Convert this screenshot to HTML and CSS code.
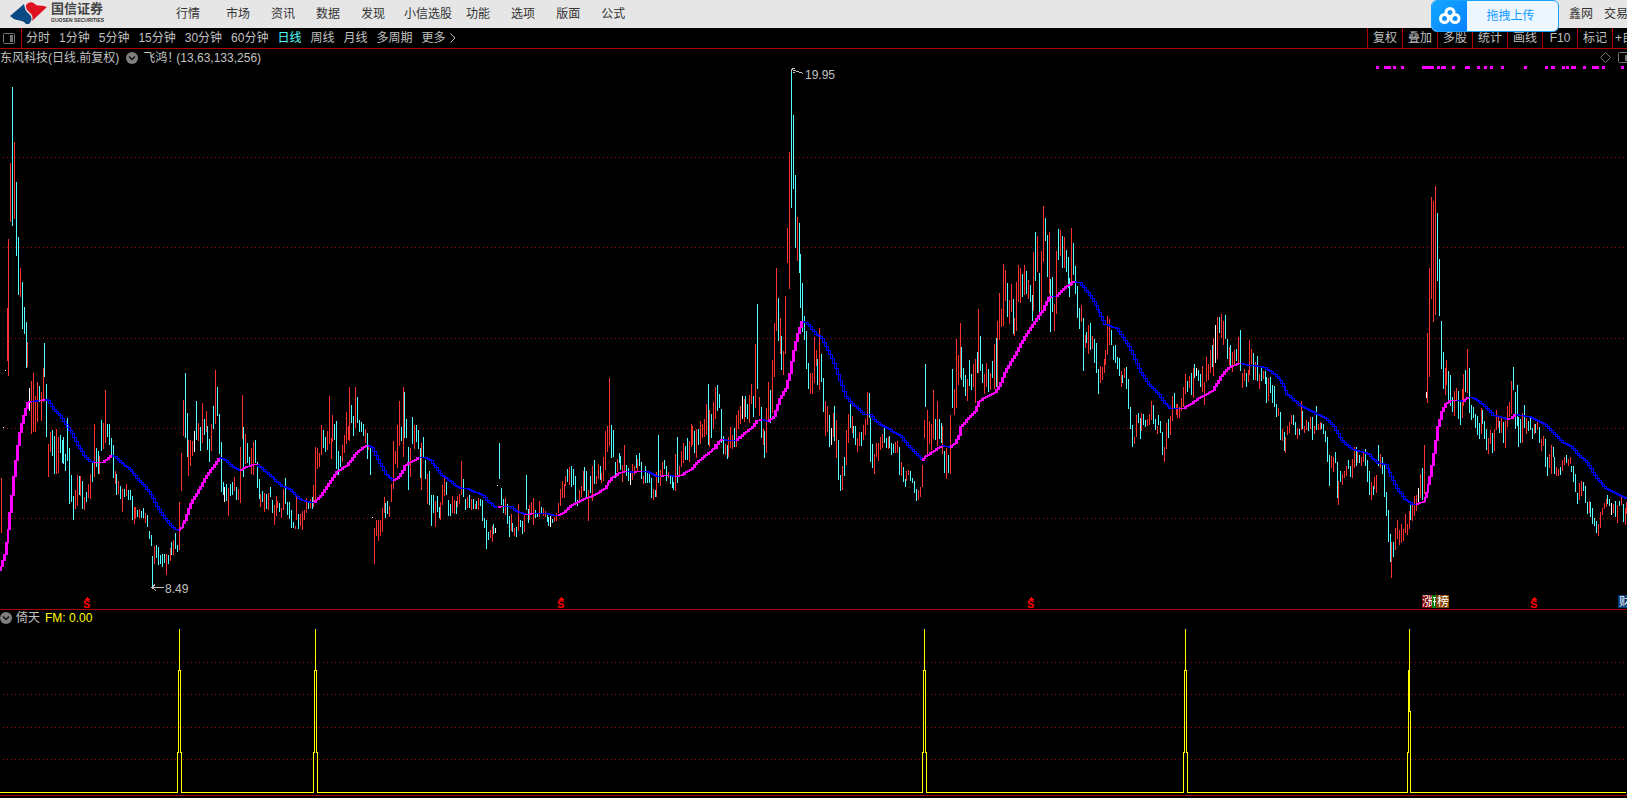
FILE: index.html
```html
<!DOCTYPE html>
<html lang="zh-CN">
<head>
<meta charset="utf-8">
<title>国信证券</title>
<link rel="stylesheet" href="styles.css">
</head>
<body>
<header class="topbar">
  <div class="brand">
    <svg class="brand-mark" width="38" height="24" viewBox="0 0 38 24" aria-hidden="true">
      <path fill="#0c4a85" d="M0 14 14 2C15 6 15 8 18 11C22 14 23 18 19 22L16 22C13 18 9 19 4 17Z"/>
      <path fill="#df1220" d="M16 3C20-1 23 0 26 3C29 4 32 3 37 5L22 19C24 13 20 11 18 9C16 7 16 5 16 3Z"/>
    </svg>
    <div class="brand-text"><span class="brand-cn">国信证券</span><span class="brand-en">GUOSEN SECURITIES</span></div>
  </div>
  <nav class="menu">
    <button class="wide">行情</button><button>市场</button><button>资讯</button><button>数据</button><button>发现</button><button class="tight">小信选股</button><button>功能</button><button>选项</button><button>版面</button><button>公式</button>
  </nav>
  <nav class="menu-right"><button>鑫网</button><button>交易</button></nav>
  <button class="upload">
    <span class="upload-icon"><svg width="22" height="18" viewBox="0 0 22 18" fill="none" stroke="#fff" stroke-width="3" aria-hidden="true"><circle cx="11" cy="5.500" r="4"/><circle cx="5.500" cy="11.500" r="4"/><circle cx="16" cy="11.500" r="4"/></svg></span>
    <span class="upload-label">拖拽上传</span>
  </button>
</header>
<div class="toolbar">
  <button class="panel-toggle" aria-label="侧栏"><svg width="12" height="11" viewBox="0 0 12 11" aria-hidden="true"><rect x=".5" y=".5" width="11" height="10" rx="1" fill="none" stroke="#777"/><rect x="7" y="2" width="3" height="7" fill="#777"/></svg></button>
  <div class="periods">
    <button>分时</button><button>1分钟</button><button>5分钟</button><button>15分钟</button><button>30分钟</button><button>60分钟</button><button class="active">日线</button><button>周线</button><button>月线</button><button>多周期</button><button>更多<svg class="more" width="6" height="10" viewBox="0 0 6 10" fill="none" stroke="#c0c0c0" aria-hidden="true"><path d="M.5.500 5 5 .5 9.500"/></svg></button>
  </div>
  <div class="tools">
    <button>复权</button><button>叠加</button><button>多股</button><button>统计</button><button>画线</button><button>F10</button><button>标记</button><button class="clipped">+自</button>
  </div>
</div>
<main class="pane price-pane">
  <svg class="plot" id="price" aria-label="日线">
    <g class="grid"><path d="M3 108.500H2600M3 198.500H2600M3 289.500H2600M3 379.500H2600M3 469.500H2600"/></g>
    <path class="bar up" id="up"/><path class="bar down" id="down"/><path class="bar flat" id="flat"/>
    <path class="ma-fall" id="fall"/><path class="ma-rise" id="rise"/>
    <path class="signals" id="signals"/>
    <path class="pointer" d="M791.500 20V23M792 20.500 803 24.500M792 19.500H795M793 23.500H795"/>
    <text class="value" x="805" y="30">19.95</text>
    <path class="pointer" d="M152 538.500H164M155 535.500 152 538.500 156 542"/>
    <text class="value" x="165" y="544">8.49</text>
    <g class="event">
      <path d="M84 551H90L87 548Z"/><text x="83" y="559">S</text>
      <path d="M558 551H564L561 548Z"/><text x="557" y="559">S</text>
      <path d="M1028 551H1034L1031 548Z"/><text x="1027" y="559">S</text>
      <path d="M1531 551H1537L1534 548Z"/><text x="1530" y="559">S</text>
    </g>
    <g class="tags">
      <rect x="1422" y="546" width="12" height="13" fill="#800000"/><text x="1422" y="557">涨</text>
      <rect x="1432" y="546" width="5" height="13" fill="#008000"/><path d="M1433 548.500H1436M1434.500 548V557M1433 552.500H1436" stroke="#fff"/>
      <rect x="1436" y="546" width="13" height="13" fill="#804000"/><text x="1437" y="557">榜</text>
      <rect x="1618" y="546" width="13" height="13" fill="#003a75"/><text x="1619" y="557">财</text>
    </g>
  </svg>
  <div class="caption">
    <span>东风科技(日线.前复权)</span>
    <svg class="chevron" width="12" height="12" viewBox="0 0 12 12" aria-hidden="true"><circle cx="6" cy="6" r="6" fill="#808080"/><path d="M3 4.500 6 7.500 9 4.500" fill="none" stroke="#111" stroke-width="1.500"/></svg>
    <span class="formula">飞鸿！</span><span>(13,63,133,256)</span>
    <svg class="corner" width="27" height="12" viewBox="0 0 27 12" fill="none" stroke="#777" aria-hidden="true"><path d="M5.500.500 10.500 5.500 5.500 10.500 .5 5.500Z"/><rect x="18.500" y=".5" width="12" height="10" rx="1"/><path d="M26 3V9" stroke-width="2"/></svg>
  </div>
</main>
<section class="pane signal-pane">
  <svg class="plot" id="fm" aria-label="倚天">
    <g class="grid"><path d="M3 52.500H2600M3 84.500H2600M3 117.500H2600M3 149.500H2600"/></g>
    <path class="spikes" id="spikes"/>
  </svg>
  <div class="caption">
    <svg class="chevron" width="12" height="12" viewBox="0 0 12 12" aria-hidden="true"><circle cx="6" cy="6" r="6" fill="#808080"/><path d="M3 4.500 6 7.500 9 4.500" fill="none" stroke="#111" stroke-width="1.500"/></svg>
    <span>倚天</span><span class="fm">FM: 0.00</span>
  </div>
</section>
<script src="chart.js"></script>
</body>
</html>
```

FILE: styles.css
```css
* { box-sizing: border-box; }
body {
  margin: 0;
  background: #000;
  color: #c0c0c0;
  font: 12px/16px "Liberation Sans", "Noto Sans CJK SC", sans-serif;
  overflow: hidden;
}
button {
  padding: 0;
  border: 0;
  background: none;
  color: inherit;
  font: inherit;
  white-space: nowrap;
  flex: none;
}
.topbar {
  position: relative;
  display: flex;
  align-items: center;
  height: 28px;
  background: #e6e6e6;
  color: #333;
}
.brand { display: flex; gap: 3px; width: 176px; padding-left: 10px; }
.brand-mark { flex: none; }
.brand-text { display: flex; flex-direction: column; }
.brand-cn { font-size: 13px; line-height: 14px; font-weight: bold; color: #444; }
.brand-en { font-size: 5px; line-height: 8px; font-weight: bold; white-space: nowrap; }
.menu { display: flex; gap: 21px; }
.menu .wide { margin-right: 5px; }
.menu .tight { margin: 0 -7px 0 -2px; }
.menu-right { display: flex; gap: 11px; width: 58px; margin-left: auto; overflow: hidden; }
.upload {
  position: absolute;
  top: 0;
  right: 68px;
  z-index: 1;
  display: flex;
  width: 128px;
  height: 32px;
  overflow: hidden;
  border: 1px solid #1aa0ff;
  border-radius: 6px;
  background: #edf7ff;
  color: #109bff;
}
.upload-icon {
  display: flex;
  align-items: center;
  justify-content: center;
  width: 35px;
  height: 30px;
  background: linear-gradient(135deg, #10a8ff, #0b80ff);
}
.upload-label { flex: 1; padding-right: 4px; line-height: 30px; }
.toolbar {
  display: flex;
  height: 21px;
  border-bottom: 1px solid #b00000;
  line-height: 20px;
}
.panel-toggle { display: flex; align-items: center; width: 22px; padding-left: 3px; border-right: 1px solid #b00000; }
.periods { display: flex; gap: 9px; padding-left: 4px; }
.periods .active { color: #54ffff; }
.more { margin-left: 4px; vertical-align: -1px; }
.tools { display: flex; margin-left: auto; }
.tools button { width: 35px; border-left: 1px solid #b00000; }
.tools .clipped { width: 15px; padding-left: 2px; overflow: hidden; text-align: left; }
.pane { display: grid; border-bottom: 1px solid #b00000; }
.pane > * { grid-area: 1 / 1; }
.plot { display: block; width: 100%; overflow: visible; shape-rendering: crispEdges; }
.price-pane .plot { height: 560px; }
.signal-pane .plot { height: 185px; }
.caption { display: flex; align-items: center; align-self: start; height: 17px; white-space: nowrap; }
.price-pane .chevron { margin: 0 5px 0 7px; }
.formula { width: 33px; }
.signal-pane .caption { height: 15px; }
.signal-pane .chevron { margin-right: 4px; }
.corner { margin-left: auto; }
.fm { margin-left: 5px; color: #ff0; }
.grid path { stroke: #a00000; stroke-dasharray: 1 3; }
.bar { fill: none; stroke-width: 1; }
.up { stroke: #ff3232; }
.down { stroke: #54ffff; }
.flat { stroke: #fff; }
.ma-rise { fill: #f0f; }
.ma-fall { fill: none; stroke: #00f; }
.signals { stroke: #f0f; stroke-width: 3; }
.pointer { fill: none; stroke: #c0c0c0; }
.value { fill: #c0c0c0; }
.event { fill: #f00; font: bold 11px/11px "Liberation Sans", sans-serif; }
.tags text { fill: #fff; font-size: 12px; }
.spikes { fill: none; stroke: #ff0; }
```

FILE: chart.js
```js
// Bars: r = up, c = down, w = flat, then x, high and low in thirds of a pixel
// from the segment's origin. Averages: m = rising run, b = falling run.
const segments = [
  { x: 0, y: 281, bars: `
r4,444,608 r22,-65,92 r25,-272,137 r31,-501,-324 c37,-729,-313 r43,-564,-334 c49,-444,-222 c55,-279,-105
r61,-186,-99 c67,-144,-4 c73,-69,12 c79,-24,113 r82,37,110 w16,121,124 w10,292,295 w88,174,242 r94,153,311
r100,129,305 r106,198,305 r112,156,275 c118,168,215 r124,186,272 r130,114,215 c133,39,140 c139,162,320
r145,342,440 r151,306,365 c157,300,377 c163,318,431 r169,297,431 r175,321,428 c181,315,368 c187,330,398
c190,321,401 c196,372,423 c202,264,392 c208,354,521 c214,435,516 c220,498,570 r226,480,536 r232,435,527
c238,438,494 r241,438,497 c247,453,536 r253,501,539 c259,486,515 r265,462,503 r271,432,506 c277,393,455
r283,282,440 c289,354,410 c295,363,431 r298,378,431 c304,270,362 r310,279,356 r316,180,338 c322,282,320
c328,282,344 c334,324,374 c340,345,443 r346,423,461 c349,432,494 r355,453,491 c361,468,506 r367,477,545
c373,477,500 r379,462,497 c385,480,509 c391,480,509 c397,498,569 r403,531,581 r406,531,566 c412,540,560
r418,537,563 c424,543,563 c430,534,563 r436,549,578 c442,555,590 c448,603,626 c454,615,647 c457,678,773
r463,648,701 c469,645,683 c475,651,704 c481,675,701 c487,672,710 c493,672,698 r499,672,734 c505,675,701
r511,654,692 c514,636,674 r520,630,674 c526,609,656 c532,645,665 r538,516,659 r544,369,482 r550,210,317
c556,129,323 c562,249,380 r565,330,437 r571,330,407 r577,333,377 w583,303,365 c589,213,329 r595,279,332
c601,291,362 r607,219,338 c613,267,314 r619,243,305 c622,288,359 c628,327,395 r634,282,362 c640,228,296
r646,120,281 c652,171,257 c658,252,371 c664,336,485 c670,456,494 w673,471,515 c679,462,512 r685,474,557
c691,462,497 c697,456,494 r703,441,482 c709,471,509 r715,477,509 r721,351,518 r727,195,326 c730,291,440
r736,312,401 c742,339,398 c748,381,404 r754,354,431 r760,336,434 c766,330,398 c772,396,475 c778,447,506
r781,492,530 c787,483,515 r793,489,545 c799,492,536 r805,489,539 c811,471,500 c817,510,548 r823,525,584
r829,498,557 r832,513,533 c838,519,545 r844,534,563 r850,477,539 c856,444,521 c862,516,554 c868,516,566
c874,540,593 c880,576,593 r886,588,596 r889,501,569 c895,552,596 r901,552,587 r907,543,599 r913,540,569
r919,504,548 c925,516,536 r931,507,533 c937,501,536 r940,465,530 r946,351,515 r952,354,416 r958,369,410
r964,285,374 c970,300,353 c976,321,365 r982,303,359 r988,198,341 r994,324,386 r997,255,335 c1003,282,329
c1009,273,416 c1015,363,434 c1021,378,410 r1027,345,395 r1033,315,368 r1039,246,341 r1045,288,331
r1048,171,332 c1054,225,278 c1060,258,317 r1066,171,293 c1072,201,278 c1078,270,305 c1084,276,305
c1090,282,317 r1096,297,338 c1102,309,386 r1105,348,359 c1111,354,434 w1117,561,564 r1123,594,701
r1129,570,617 r1135,570,632 r1141,570,617 r1147,534,605 r1153,501,548 c1156,519,563 c1162,513,551
r1168,528,560 r1174,462,515 r1180,333,476 r1186,363,401 r1192,285,413 r1198,213,347`,
    runs: [
      "m 0,722 4,708 10,692 16,672 22,638 25,598 31,548 37,495 43,440 49,390 55,345 61,308 67,280 73,256 79,234 85,218 91,215",
      "b 91,215 118,212", "m 118,212 133,209",
      "b 133,207 145,212 163,237 187,264 211,300 235,345 253,375 271,393 283,398",
      "m 283,398 310,396 322,387 334,377",
      "b 334,377 346,379 364,397 391,418 412,444 436,470 454,492 472,528 490,556 508,580 526,597 538,600",
      "m 538,600 547,592 556,570 574,520 598,479 622,436 646,403 658,384",
      "b 658,383 673,387 697,409 721,422", "m 721,422 736,412 760,404 772,404",
      "b 772,404 784,412 808,434 847,468 871,478 898,505 919,515 943,517",
      "m 943,517 964,497 988,461 1012,425 1042,406 1072,366 1096,348 1105,347",
      "b 1105,347 1117,352 1135,388 1159,433 1180,450",
      "m 1180,450 1186,448"] },
  { x: 400, y: 321, bars: `
c4,171,212 r10,51,260 c13,66,203 c19,147,203 c25,231,359 r31,234,320 c37,141,221 r43,165,236 c49,165,215
c55,180,236 c61,234,323 r64,219,359 c70,201,263 c76,270,326 r82,312,401 c88,303,404 c94,375,467 c100,375,428
r106,393,470 c112,378,425 c118,411,443 r121,396,449 r127,345,404 r133,324,377 c139,336,374 c145,390,437
c151,402,437 r157,378,428 r163,390,431 c169,393,431 r172,378,410 r178,372,401 r184,273,374 c190,327,380
c196,387,419 r202,381,413 c208,375,413 r214,387,419 c220,387,416 r226,402,416 c229,393,416 r235,384,419
c241,387,407 c247,390,452 c253,444,473 c259,450,536 c265,486,509 r271,480,503 r277,468,515 c280,462,491
w286,474,488 w292,345,348 c298,219,326 c304,354,404 c310,387,428 r316,384,434 c322,402,461 c328,438,500
r334,432,482 c337,459,485 r343,474,497 c349,471,500 r355,402,482 c361,450,470 c367,453,491 r373,435,485
c379,315,419 c385,417,458 r388,405,449 r394,396,428 r400,384,464 c406,420,443 c412,432,440 r418,393,440
c424,411,431 r430,414,437 r436,423,440 c442,432,455 c445,441,467 w451,438,470 c457,447,458 r463,441,455
r469,429,452 r475,399,428 r481,357,407 r487,333,383 r493,342,383 r496,318,347 c502,297,335 r508,291,344
c514,288,350 c520,297,344 c526,318,401 c532,390,407 r538,360,389 r544,348,380 r550,303,362 c553,291,362
c559,303,380 r565,360,452 c571,318,368 r577,288,392 c583,270,341 r589,318,341 r595,282,326 c601,288,329
r604,309,338 r610,261,332 r616,183,299 r622,168,245 r628,24,227 c634,165,263 c640,180,260 c646,276,323
r652,267,305 c658,249,278 c661,258,299 r667,285,335 r673,225,302 c679,285,317 c685,294,332 w691,309,344
r697,282,329 r703,288,314 c709,255,293 r712,267,305 c718,249,287 c724,276,326 r730,318,341 c736,288,338
c742,303,338 c748,312,338 c754,324,383 r760,357,389 c766,360,380 r769,306,380 c775,195,338 r781,300,347
r787,276,320 c793,270,296 c799,288,332 r805,306,323 c811,318,341 c817,321,353 c820,336,359 r826,252,362
c832,201,338 r838,288,320`,
    runs: [
      "m -20,330 -8,325 -2,319",
      "m -2,319 4,311 10,300 16,287 28,278 43,272 55,263",
      "b 55,263 76,263 94,272 109,293 127,317 148,330 166,347 184,354 202,356 250,376 268,397 290,413",
      "m 296,413 308,408", "b 308,409 332,410 346,422 376,433", "m 376,433 400,431",
      "b 400,431 442,431 460,436 475,436",
      "m 475,436 493,427 520,402 550,388 580,377 616,355 637,322 661,308 679,304",
      "b 679,304 703,307", "m 703,306 724,304", "b 724,304 742,305 772,319 785,319", "m 785,318 805,316",
      "b 805,316 826,319",
      "m 826,319 844,316 874,298 892,278 922,252 944,235 958,213 967,209",
      "b 967,209 985,211 1010,211", "m 1010,211 1036,188 1060,170 1072,152 1084,148"] },
  { x: 680, y: 11, bars: `
r4,1173,1220 r10,1149,1208 c16,1158,1199 c22,1134,1199 r28,1143,1205 r34,1092,1160 r37,1098,1154 c43,1113,1178
r49,1107,1193 c55,1107,1154 r61,1083,1151 r67,1092,1133 r73,1077,1130 r79,1032,1124 c85,972,1154 r88,1050,1160
c94,1062,1133 r100,1026,1106 r106,981,1076 c112,975,1052 c118,1002,1043 c124,1047,1148 c130,1128,1181
r136,1152,1184 c142,1155,1196 r145,1131,1190 r151,1101,1163 r157,1125,1166 c163,1104,1160 r169,1065,1160
r175,1050,1106 r181,1038,1091 w187,1008,1076 r193,1017,1085 c196,1008,1070 c202,1032,1076 r208,1005,1088
r214,972,1031 c220,1008,1070 r226,852,1043 c232,732,986 r238,1011,1067 c244,1041,1133 r250,1107,1154
c253,1113,1193 r259,1044,1178 r265,966,1082 c271,990,1088 r277,900,1058 r283,789,950 r289,624,812
c295,714,842 r301,774,881 c304,828,929 r310,873,944 r316,708,881 r322,504,608 r328,276,686 c334,36,443
c340,165,386 c346,345,563 r352,471,602 c358,489,638 c361,582,743 c367,669,815 c373,768,839 c379,813,926
c385,909,986 r391,939,1001 r397,939,1001 r403,831,968 r409,870,917 c412,897,974 r418,804,989 c424,882,965
c430,954,1055 r436,1023,1127 r442,1038,1115 c448,1065,1160 w454,1104,1154 r460,1059,1130 c463,1038,1142
r469,1080,1193 c475,1140,1259 c481,1245,1292 r487,1218,1289 c493,1191,1247 r499,1110,1214 r505,1062,1148
c511,1029,1103 r517,1068,1118 c520,1098,1133 c526,1098,1154 r532,1134,1175 r538,1116,1157 c544,1116,1157
r550,1095,1139 r556,1077,1124 r562,996,1094 c568,999,1073 c571,1074,1205 c577,1152,1223 r583,1182,1241
r589,1149,1190 r595,1149,1202 r601,1131,1169 r607,1122,1163 c613,1095,1148 c619,1134,1163 r625,1131,1166
c628,1128,1163 c634,1149,1184 c640,1152,1178 r646,1146,1178 r652,1143,1178 c658,1161,1244`,
    runs: [
      "b 244,1078 265,1083",
      "m 265,1083 283,1070 301,1015 319,985 331,940 343,870 355,820 367,785",
      "b 367,785 379,787 391,800 409,822 427,835 445,870 463,910 481,960 499,1010 517,1030 553,1062 571,1064 589,1084 613,1100 661,1126 685,1155 727,1198"] },
  { x: 900, y: 141, bars: `
r4,816,857 c10,831,875 c16,867,890 r19,843,872 r25,840,854 c31,843,872 c37,864,878 c43,873,908 c49,897,932
r55,900,929 r61,891,920 r67,825,890 r73,690,743 c76,522,650 r82,660,797 r88,693,761 r94,702,779 r100,600,746
c106,687,749 r112,633,767 c118,687,746 c124,699,758 r127,708,791 c133,783,848 r139,774,866 c145,795,848
r151,675,851 c157,537,653 r163,597,674 r169,447,653 r175,495,584 r181,399,563 c184,471,569 c190,534,590
c196,555,617 r202,567,632 c208,510,587 c214,552,599 r220,522,590 r226,507,638 c232,486,548 r235,357,548
c241,438,542 c247,522,578 r253,552,611 r259,519,590 c265,537,605 r271,549,599 c277,513,563 r283,462,596
c289,444,590 r292,393,590 r298,309,449 r304,357,410 r310,222,407 r316,240,332 c322,279,380 r328,330,401
r334,282,365 c340,327,431 r343,384,437 r349,276,422 r355,225,335 r361,234,338 c367,252,320 r373,225,314
c379,243,311 r385,270,326 c391,285,335 c397,315,392 r400,186,362 c406,126,272 r412,138,245 c418,249,389
r424,183,371 r430,48,215 c436,84,152 c442,135,260 r448,126,311 c451,267,425 c457,261,365 r463,342,422
r469,183,371 c475,117,209 r481,120,197 c487,138,233 r493,141,233 c499,180,245 c505,201,293 c508,264,320
r514,114,287 c520,159,254 c526,228,311 c532,288,383 c538,354,416 r544,345,395 c550,384,542 r556,435,473
c559,426,458 r565,405,491 c571,399,479 r577,438,476 c583,447,518 c589,459,548 c595,537,611 r601,528,578
r607,531,569 r613,507,548 r616,480,524 r622,378,494 r628,387,464 c634,420,464 c640,468,509 c646,465,518
c652,501,536 c658,504,557 r664,543,590 c667,555,578 r673,534,563 c679,531,596 c685,567,656 c691,651,716
c697,705,770 r703,741,761 r709,675,740 c715,669,698 c721,684,746 r724,669,722 c730,672,704 c736,690,710
r742,687,707 r748,672,704 r754,633,689 c760,645,701 c766,687,719 r772,708,731 c775,675,704 c781,693,728
c787,726,794 r793,771,815 r799,699,776 c805,687,743 r811,678,734 r817,618,692 c823,609,653 r829,642,674
r832,642,683 r838,651,683 r844,624,662 r850,591,650 r856,552,611 c862,573,605 r868,558,593 c874,549,614
r880,534,623 c883,522,563 w889,534,557 c895,540,572`,
    runs: [
      "m 67,810 82,796 100,785 124,768", "b 124,767 151,771",
      "m 151,771 166,760 178,735 184,710 208,682 226,665 238,635 262,618 286,606 298,590 322,535 346,495 370,450 388,420 406,395 430,360 448,322 454,320",
      "b 454,320 469,320", "m 469,320 493,294 523,275",
      "b 523,275 541,278 559,300 583,335 616,402 652,416 688,468 724,548 748,584 772,606 796,640 811,654 838,656",
      "m 838,655 853,654 877,640 901,621 919,614 940,600 964,560 982,537 1000,527 1021,520"] },
  { x: 1200, y: 241, bars: `
c1,252,290 r7,228,305 r13,276,344 r19,201,275 r25,222,269 r31,180,248 c37,165,230 r40,144,257 w46,105,218
r52,81,206 c58,81,128 r64,72,143 r70,93,164 c76,75,146 c82,147,206 r88,171,224 c91,165,230 r97,186,245
r103,180,227 c109,177,212 r115,141,218 c121,120,242 r127,249,293 r133,237,272 c139,249,290 r145,240,275
r148,150,254 r154,177,221 c160,189,269 r166,216,269 c172,198,272 r178,252,296 c184,234,272 r190,243,266
c196,243,281 c199,261,338 r205,264,332 c211,261,308 c217,285,338 c223,288,350 c229,342,380 r235,354,377
c241,366,449 r247,417,452 c253,426,482 r256,441,488 r262,408,434 r268,396,428 r274,375,401 c280,375,404
c286,396,434 r292,414,446 c298,417,434 r304,333,419 c307,363,416 r313,408,428 r319,390,419 c325,396,422
r331,381,416 c337,381,449 r343,408,431 c349,348,419 r355,402,419 r361,396,419 c364,399,416 c370,402,431
c376,423,455 c382,441,515 c388,495,587 r394,498,533 r400,501,545 c406,486,518 c412,516,623 r415,573,644
c421,543,575 r427,552,584 r433,543,563 r439,528,557 c445,510,536 c451,528,560 r457,507,563 r463,471,533
c469,471,527 r472,483,518 c478,495,518 r484,501,527 r490,486,515 c496,477,527 c502,510,575 c508,543,614
r514,576,629 c520,588,614 r523,561,596 r529,555,608 c535,465,527 r541,492,533 c547,501,551 c553,525,620
c559,606,677 c565,660,755 c571,732,815 r574,756,863 c580,756,800 r586,714,779 r592,690,746 r598,720,764
r604,702,758 r610,717,752 r616,672,728 r622,702,734 r628,663,716 c631,645,689 r637,645,692 r643,618,677
r649,615,662 w655,594,635 r661,552,623 c667,534,629 r673,465,611 w679,306,323 r682,129,338 r688,-66,260
r694,-279,26 r700,-267,95 r706,-312,74 c712,-231,-28 c718,-93,77 c724,93,237 c730,186,296 r736,234,314
r739,210,285 c745,243,338 c751,255,347 c757,321,365 r763,303,377 r769,294,330 c775,303,386 c781,336,404
r787,297,383 r790,252,347 c796,240,305 r802,177,308 c808,234,368 c814,345,389 c820,351,383 c826,372,413
c832,378,434 c838,399,446 r844,354,431 c847,360,401 c853,393,446 c859,417,479 r865,444,491 r871,420,461
c877,429,488 r883,417,482 r889,360,419 r895,381,413 c898,393,428 r904,384,428 c910,396,458 r916,393,473
r922,348,410 r928,336,380 r934,273,371 c940,231,299 c946,306,416 c952,285,407 c955,381,470 c961,387,458
r967,369,458 c973,345,413 r979,384,431 c985,393,422 c991,384,419 c997,414,446 r1003,402,431 c1006,402,428
r1012,393,419 c1018,411,458 r1024,447,482 r1030,438,467 c1036,447,530 c1042,501,557 r1048,492,533
r1054,465,551 c1060,471,500 c1063,501,551 r1069,531,557 r1075,537,557 c1081,531,554 r1087,510,542
r1093,501,524 c1099,495,518 r1105,507,527 r1111,501,521 c1114,528,545 c1120,528,575 c1126,552,605
c1132,609,641 r1138,579,629 r1144,573,617 c1150,576,602 c1156,588,638 c1162,636,671 r1168,633,668
c1171,636,680 c1177,654,701 c1183,684,707 c1189,693,728 r1195,702,737 r1201,666,713 r1207,654,674
r1213,639,656 r1219,627,650 c1222,615,641 c1228,627,647 w1234,639,674 r1240,642,668 c1246,633,680
r1252,645,698 c1258,633,647 r1264,621,644 c1270,642,695 r1276,654,704 r1279,636,671`,
    runs: [
      "b 121,220 145,226 172,228 196,233 232,258 247,280 262,312 307,350 349,372 379,385 403,410 427,452 457,477 502,490 535,519 559,524 574,560 592,595 616,627 637,642 649,643",
      "m 649,643 673,634 682,608 691,560 703,490 715,410 727,365 739,340 751,332 769,330",
      "b 769,330 790,333", "m 790,333 805,323", "b 805,322 823,324 850,343 880,375 922,387",
      "m 922,387 934,384 946,373",
      "b 946,373 988,380 1036,402 1090,457 1114,468 1132,490 1162,518 1192,565 1220,595 1280,625"] }
];

const px = v => Math.round(v / 3);
const paths = { r: "", c: "", w: "", m: "", b: "" };

for (const s of segments) {
  for (const bar of s.bars.trim().split(/\s+/)) {
    const [x, hi, lo] = bar.slice(1).split(",").map(Number);
    paths[bar[0]] += `M${s.x + Math.floor(x / 3) + 0.5} ${s.y + px(hi)}V${s.y + px(lo)}`;
  }
  for (const run of s.runs) {
    const [kind, ...rest] = run.split(" ");
    const pts = rest.map(p => p.split(",").map(Number));
    const steps = [];
    for (let i = 1; i < pts.length; i++) {
      const [x0, y0] = pts[i - 1], [x1, y1] = pts[i];
      const n = Math.max(1, Math.round((x1 - x0) / 6));
      for (let k = i === 1 ? 0 : 1; k <= n; k++) {
        const t = k / n;
        steps.push([s.x + Math.floor((x0 + (x1 - x0) * t) / 3), s.y + Math.floor((y0 + (y1 - y0) * t) / 3)]);
      }
    }
    for (let i = 1; i < steps.length; i++) {
      const [x0, y0] = steps[i - 1], [x1, y1] = steps[i];
      if (kind === "m") {
        paths.m += `M${x0} ${Math.min(y0, y1)}H${x1 + 1}V${Math.max(y0, y1) + 1}H${x0}Z`;
      } else {
        paths.b += `M${x0} ${y0 + 0.5}H${x1 + 0.5}V${y1 + 0.5}H${x0 + 0.5}V${y0 + 0.5}`;
      }
    }
  }
}
const set = (id, d) => document.getElementById(id).setAttribute("d", d);
set("up", paths.r);
set("down", paths.c);
set("flat", paths.w);
set("rise", paths.m);
set("fall", paths.b);

const marks = [[1376, 3], [1384, 7], [1393, 3], [1401, 3], [1422, 12], [1437, 3], [1441, 5], [1452, 3],
  [1465, 5], [1477, 3], [1484, 3], [1490, 3], [1501, 3], [1524, 3], [1545, 3], [1551, 4], [1562, 3],
  [1566, 3], [1571, 5], [1583, 3], [1592, 7], [1602, 3], [1621, 3]];
set("signals", marks.map(([x, w]) => `M${x} 18.5h${w}`).join(""));

// Spikes of the FM indicator, widening towards the base line.
let fm = "M0 182.5";
for (const x of [179, 315, 924, 1185]) {
  const c = x + 0.5;
  fm += `H${c - 2}V142.500H${c - 1}V60.500H${c}V19V60.500H${c + 1}V142.500H${c + 2}V182.500`;
}
fm += "H1407.5V142.500H1408.5V60.500H1409.5V19V101.500H1410.5V182.500";
set("spikes", fm + "H1626");
```
